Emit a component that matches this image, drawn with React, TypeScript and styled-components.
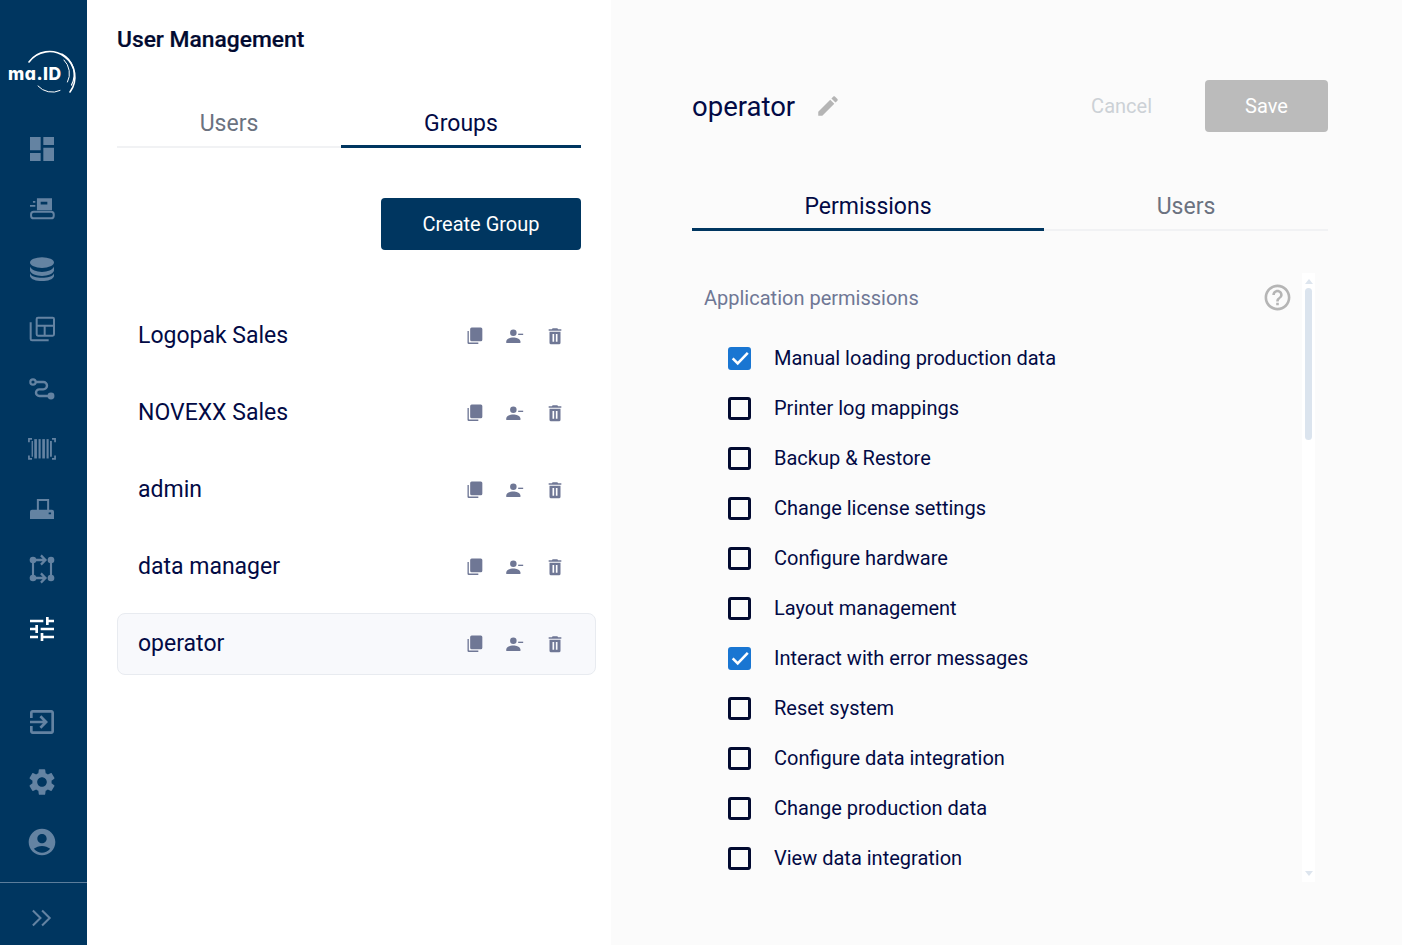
import React from "react";
import styled, { createGlobalStyle } from "styled-components";

const Global = createGlobalStyle`
  html, body { margin: 0; padding: 0; height: 100%; background: #fff; }
  body { font-family: Roboto, "Liberation Sans", sans-serif; color: #020a45; overflow: hidden; }
  * { box-sizing: border-box; }
`;

const Shell = styled.div`display: flex; width: 1402px; height: 945px; overflow: hidden;`;

const Sidebar = styled.aside`
  width: 87px; flex: none; height: 945px; background: #003660;
  display: flex; flex-direction: column;
`;
const LogoBox = styled.div`height: 119px; flex: none; svg { display: block; }`;
const NavList = styled.nav`display: flex; flex-direction: column;`;
const Spacer = styled.div`flex: 1;`;
const NavItem = styled.div<{ $active?: boolean }>`
  height: 60px; display: flex; align-items: center; justify-content: center;
  color: ${p => (p.$active ? "#ffffff" : "#6483a2")};
  svg { display: block; width: 32px; height: 32px; margin-left: -3px; }
`;
const SideFooter = styled.div`
  height: 63px; flex: none; margin-top: 10px; padding-top: 8px; border-top: 1px solid #5c7d9b; color: #6483a2;
  display: flex; align-items: center; justify-content: center;
  svg { display: block; width: 26px; height: 26px; margin-left: -6px; }
`;

const LeftPanel = styled.section`
  width: 524px; flex: none; height: 945px; background: #fff; padding: 0 15px 0 30px;
  display: flex; flex-direction: column;
`;
const Title = styled.h1`
  margin: 0; padding-top: 26px; height: 96px; font-size: 22.8px; line-height: 28px; font-weight: 500; color: #020a30;
  -webkit-text-stroke: 0.2px #020a30;
`;
const Tabs = styled.div<{ $w: string }>`
  display: grid; grid-template-columns: ${p => p.$w}; flex: none; height: 56px;
`;
const Tab = styled.div<{ $active?: boolean }>`
  display: flex; align-items: center; justify-content: center;
  height: 56px; font-size: 23px;
  color: ${p => (p.$active ? "#020a45" : "#6b7280")};
  border-bottom: ${p => (p.$active ? "3px solid #003660" : "2px solid #f1f2f4")};
  padding-top: ${p => (p.$active ? "9px" : "8px")};
`;
const LeftTabs = styled(Tabs)`width: 464px; margin-top: -4px; margin-bottom: 50px;`;
const CreateRow = styled.div`display: flex; justify-content: flex-end; width: 464px; margin-bottom: 55px;`;
const PrimaryButton = styled.button`
  width: 200px; height: 52px; border: 0; border-radius: 4px; background: #003660; color: #fff;
  font: 400 20px Roboto, sans-serif;
`;
const GroupList = styled.div`display: flex; flex-direction: column; gap: 15px;`;
const GroupRow = styled.div<{ $selected?: boolean }>`
  height: 62px; display: flex; align-items: center; padding: 0 30px 0 20px; border-radius: 8px;
  border: 1px solid ${p => (p.$selected ? "#e8ebf0" : "transparent")};
  background: ${p => (p.$selected ? "#f8f9fc" : "transparent")};
`;
const GroupName = styled.span`flex: 1; font-size: 23px; color: #020a45; padding-bottom: 2px;`;
const RowActions = styled.div`
  display: flex; gap: 20px; color: #6f7795;
  svg { display: block; width: 20px; height: 20px; flex: none; }
`;

const RightPanel = styled.section`
  flex: 1; height: 945px; background: #fbfbfb; padding: 80px 74px 0 81px;
  display: flex; flex-direction: column;
`;
const Header = styled.header`height: 52px; display: flex; align-items: center; flex: none;`;
const Heading = styled.h2`margin: 0; font-size: 27.5px; font-weight: 400; color: #020a45;`;
const EditIcon = styled.span`
  color: #b5b5b5; margin-left: 20px; svg { display: block; width: 26px; height: 26px; }
`;
const HeaderSpacer = styled.div`flex: 1;`;
const CancelBtn = styled.button`
  border: 0; background: transparent; color: #ccd1d6; font: 400 20px Roboto, sans-serif;
  margin-right: 53px; padding: 0;
`;
const SaveBtn = styled.button`
  width: 123px; height: 52px; border: 0; border-radius: 4px; background: #bbbbbb; color: #fff;
  font: 400 20px Roboto, sans-serif;
`;
const RightTabs = styled(Tabs)`width: 636px; margin-top: 43px; margin-bottom: 42px;`;
const Body = styled.div`display: flex; width: 623px; height: 609px; overflow: hidden;`;
const Perms = styled.div`flex: 1; min-width: 0; padding: 3px 0 0 12px;`;
const PermHead = styled.div`
  display: flex; align-items: center; justify-content: space-between; height: 44px; margin-bottom: 13px;
  font-size: 20px; color: #6f7795; padding-right: 9px;
  svg { display: block; width: 31px; height: 31px; color: #b5b5b5; margin-top: -1px; }
`;
const PermRow = styled.label`
  height: 50px; display: flex; align-items: center; padding-left: 24px; font-size: 20px; color: #020a45;
`;
const Check = styled.span<{ $on?: boolean }>`
  width: 23px; height: 23px; border-radius: 3px; flex: none; margin-right: 23px;
  display: flex; align-items: center; justify-content: center;
  background: ${p => (p.$on ? "#1976d2" : "transparent")};
  border: 3px solid ${p => (p.$on ? "#1976d2" : "#020a30")};
  svg { display: block; width: 22px; height: 22px; flex: none; }
`;
const ScrollTrack = styled.div`
  width: 13px; flex: none; height: 609px; background: #fff; display: flex; flex-direction: column; align-items: center;
`;
const ArrowUp = styled.div`
  width: 0; height: 0; margin-top: 6px; border-left: 4.5px solid transparent; border-right: 4.5px solid transparent;
  border-bottom: 5px solid #dde5ee;
`;
const Thumb = styled.div`width: 7px; height: 152px; margin-top: 4px; border-radius: 4px; background: #dbe4ee;`;
const ArrowDown = styled.div`
  width: 0; height: 0; margin-top: auto; margin-bottom: 6px; border-left: 4.5px solid transparent; border-right: 4.5px solid transparent;
  border-top: 5px solid #dde5ee;
`;

const LogoText = styled.text`
  font-family: Inter, "Open Sans", sans-serif; font-weight: 800; font-size: 17.5px;
  font-feature-settings: "cv11" 1; fill: #fff; letter-spacing: 0.5px;
`;
const Logo = () => (
  <svg width="87" height="119" viewBox="0 0 87 119">
    <g fill="none" stroke="#fff" strokeLinecap="round">
      <path d="M29 62 A24.5 24.5 0 0 1 70 92" strokeWidth="1.6" />
      <path d="M62 54 A23 23 0 0 1 71.5 85" strokeWidth="1.2" />
      <path d="M64 60 A19 19 0 0 1 67.5 82" strokeWidth="1" />
      <path d="M38 86 A19 19 0 0 0 60 90.5" strokeWidth="1" />
    </g>
    <LogoText x="8" y="80">ma.ID</LogoText>
  </svg>
);

const V = ({ children }: { children: React.ReactNode }) => (
  <svg viewBox="0 0 24 24" fill="currentColor">{children}</svg>
);

const icons: React.ReactNode[] = [
  <path key="d" d="M3 13h8V3H3v10zm0 8h8v-6H3v6zm10 0h8V11h-8v10zm0-18v6h8V3h-8z" />,
  <g key="p">
    <path fillRule="evenodd" d="M8.2 4h11.3v9H8.2zM11 6.5v2.2h5V6.5z" />
    <rect x="3.8" y="14" width="17" height="5" rx="2" fill="none" stroke="currentColor" strokeWidth="1.5" />
    <rect x="5.2" y="6" width="1.8" height="1.3" /><rect x="3" y="9" width="4" height="1.3" />
  </g>,
  <g key="db">
    <ellipse cx="12" cy="7.2" rx="9" ry="4" />
    <path d="M3 10.2c1 2.6 4.8 4 9 4s8-1.4 9-4v3c-.6 2.6-4.6 4-9 4s-8.4-1.4-9-4z" />
    <path d="M3 15.2c1 2.6 4.8 3.4 9 3.4s8-.8 9-3.4v2.2c-.6 2.4-4.6 3.6-9 3.6s-8.4-1.2-9-3.6z" />
  </g>,
  <g key="s" fill="none" stroke="currentColor" strokeWidth="1.5">
    <rect x="8" y="3.5" width="13" height="13.5" rx="1" />
    <path d="M8 9.5h13M14 9.5V17" />
    <path d="M3.5 7v12.5a1 1 0 0 0 1 1H17" />
  </g>,
  <g key="r">
    <circle cx="5.25" cy="6.75" r="2" fill="none" stroke="currentColor" strokeWidth="1.6" />
    <path d="M7.3 6.75H13a2.75 2.75 0 0 1 0 5.5H10a2.5 2.5 0 0 0 0 5H16.5" fill="none" stroke="currentColor" strokeWidth="1.8" />
    <circle cx="18.75" cy="17.25" r="2.6" />
  </g>,
  <g key="b">
    <path d="M4.5 4.4H2.2v2.6M19.5 4.4h2.3v2.6M4.5 19.4H2.2v-2.6M19.5 19.4h2.3v-2.6" fill="none" stroke="currentColor" strokeWidth="1.3" />
    <rect x="4.2" y="6" width="1" height="11.8" />
    <rect x="6.2" y="4.6" width="2" height="14.5" /><rect x="9.4" y="4.6" width="1.6" height="14.5" />
    <rect x="12.2" y="4.6" width="2" height="14.5" /><rect x="15.4" y="4.6" width="1.6" height="14.5" />
    <rect x="18" y="6" width="1.4" height="11.8" />
  </g>,
  <g key="pr">
    <path d="M8.9 13V5.2h7.7V13" fill="none" stroke="currentColor" strokeWidth="1.5" />
    <path fillRule="evenodd" d="M4.5 12.5H19.5a1.5 1.5 0 0 1 1.5 1.5v5.5H3V14a1.5 1.5 0 0 1 1.5-1.5zM17 14.6v1.4h1.8v-1.4z" />
  </g>,
  <g key="g">
    <circle cx="5.25" cy="5.25" r="2.5" /><circle cx="18.75" cy="5.25" r="2.5" />
    <circle cx="5.25" cy="18.75" r="2.5" /><circle cx="18.75" cy="18.75" r="2.5" />
    <path d="M5.25 6v12M18.75 6v12" stroke="currentColor" strokeWidth="1.6" fill="none" />
    <path d="M7 5.25h7.6M11.2 1.8l3.4 3.45-3.4 3.45M7 18.75h7.6M11.2 15.3l3.4 3.45-3.4 3.45" stroke="currentColor" strokeWidth="1.7" fill="none" />
  </g>,
  <path key="t" d="M3 17v2h6v-2H3zM3 5v2h10V5H3zm10 16v-2h8v-2h-8v-2h-2v6h2zM7 9v2H3v2h4v2h2V9H7zm14 4v-2H11v2h10zm-6-4h2V7h4V5h-4V3h-2v6z" />,
];

const bottomIcons: React.ReactNode[] = [
  <path key="e" d="M10.09 15.59L11.5 17l5-5-5-5-1.41 1.41L12.67 11H3v2h9.67l-2.58 2.59zM19 3H5c-1.11 0-2 .9-2 2v4h2V5h14v14H5v-4H3v4c0 1.1.89 2 2 2h14c1.1 0 2-.9 2-2V5c0-1.1-.9-2-2-2z" />,
  <path key="c" d="M19.14 12.94c.04-.3.06-.61.06-.94 0-.32-.02-.64-.07-.94l2.03-1.58c.18-.14.23-.41.12-.61l-1.92-3.32c-.12-.22-.37-.29-.59-.22l-2.39.96c-.5-.38-1.03-.7-1.62-.94l-.36-2.54c-.04-.24-.24-.41-.48-.41h-3.84c-.24 0-.43.17-.47.41l-.36 2.54c-.59.24-1.13.57-1.62.94l-2.39-.96c-.22-.08-.47 0-.59.22L2.74 8.87c-.12.21-.08.47.12.61l2.03 1.58c-.05.3-.09.63-.09.94s.02.64.07.94l-2.03 1.58c-.18.14-.23.41-.12.61l1.92 3.32c.12.22.37.29.59.22l2.39-.96c.5.38 1.03.7 1.62.94l.36 2.54c.05.24.24.41.48.41h3.84c.24 0 .44-.17.47-.41l.36-2.54c.59-.24 1.13-.56 1.62-.94l2.39.96c.22.08.47 0 .59-.22l1.92-3.32c.12-.22.07-.47-.12-.61l-2.01-1.58zM12 15.6c-1.98 0-3.6-1.62-3.6-3.6s1.62-3.6 3.6-3.6 3.6 1.62 3.6 3.6-1.62 3.6-3.6 3.6z" />,
  <path key="a" d="M12 2C6.48 2 2 6.48 2 12s4.48 10 10 10 10-4.48 10-10S17.52 2 12 2zm0 4c1.93 0 3.5 1.57 3.5 3.5S13.93 13 12 13s-3.5-1.57-3.5-3.5S10.07 6 12 6zm0 14c-2.03 0-4.43-.82-6.14-2.88C7.55 15.8 9.68 15 12 15s4.45.8 6.14 2.12C16.43 19.18 14.03 20 12 20z" />,
];

const CopyIcon = () => (
  <V>
    <path d="M3 6v14a1.5 1.5 0 0 0 1.5 1.5H16v-1.8H5a.4.4 0 0 1-.4-.4V6z" />
    <path d="M8 1.8h11a1.8 1.8 0 0 1 1.8 1.8v13a1.8 1.8 0 0 1-1.8 1.8H8A1.8 1.8 0 0 1 6.2 16.6V3.6A1.8 1.8 0 0 1 8 1.8z" />
  </V>
);
const PersonMinus = () => (
  <V>
    <circle cx="10" cy="8" r="3.9" />
    <path d="M1.5 20.5v-1.8c0-3.2 5.3-4.9 8.5-4.9s8.5 1.7 8.5 4.9v1.8z" />
    <rect x="15.8" y="9.2" width="6" height="1.6" />
  </V>
);
const TrashIcon = () => (
  <V>
    <path fillRule="evenodd" d="M5.4 6.8h13.2v13.4a1.8 1.8 0 0 1-1.8 1.8H7.2a1.8 1.8 0 0 1-1.8-1.8zM9 9.5v9.5h2V9.5zM13 9.5v9.5h2V9.5z" />
    <path d="M19.6 3.8h-3.8l-1-1.1H9.2l-1 1.1H4.4v1.8h15.2z" />
  </V>
);

const groups = ["Logopak Sales", "NOVEXX Sales", "admin", "data manager", "operator"];
const perms: [string, boolean][] = [
  ["Manual loading production data", true],
  ["Printer log mappings", false],
  ["Backup & Restore", false],
  ["Change license settings", false],
  ["Configure hardware", false],
  ["Layout management", false],
  ["Interact with error messages", true],
  ["Reset system", false],
  ["Configure data integration", false],
  ["Change production data", false],
  ["View data integration", false],
];

export default function App() {
  return (
    <Shell>
      <Global />
      <Sidebar>
        <LogoBox><Logo /></LogoBox>
        <NavList>
          {icons.map((ic, i) => (
            <NavItem key={i} $active={i === 8}><V>{ic}</V></NavItem>
          ))}
        </NavList>
        <Spacer />
        <NavList>
          {bottomIcons.map((ic, i) => (
            <NavItem key={i}><V>{ic}</V></NavItem>
          ))}
        </NavList>
        <SideFooter>
          <svg viewBox="0 0 24 24" fill="none" stroke="currentColor" strokeWidth="1.9">
            <path d="M4.5 5l7 7-7 7M13 5l7 7-7 7" />
          </svg>
        </SideFooter>
      </Sidebar>

      <LeftPanel>
        <Title>User Management</Title>
        <LeftTabs $w="224px 240px">
          <Tab>Users</Tab>
          <Tab $active>Groups</Tab>
        </LeftTabs>
        <CreateRow><PrimaryButton>Create Group</PrimaryButton></CreateRow>
        <GroupList>
          {groups.map(g => (
            <GroupRow key={g} $selected={g === "operator"}>
              <GroupName>{g}</GroupName>
              <RowActions><CopyIcon /><PersonMinus /><TrashIcon /></RowActions>
            </GroupRow>
          ))}
        </GroupList>
      </LeftPanel>

      <RightPanel>
        <Header>
          <Heading>operator</Heading>
          <EditIcon>
            <svg viewBox="0 0 24 24" fill="currentColor">
              <path d="M3 17.25V21h3.75L17.81 9.94l-3.75-3.75L3 17.25zM20.71 7.04c.39-.39.39-1.02 0-1.41l-2.34-2.34c-.39-.39-1.02-.39-1.41 0l-1.83 1.83 3.75 3.75 1.83-1.83z" />
            </svg>
          </EditIcon>
          <HeaderSpacer />
          <CancelBtn>Cancel</CancelBtn>
          <SaveBtn>Save</SaveBtn>
        </Header>
        <RightTabs $w="352px 284px">
          <Tab $active>Permissions</Tab>
          <Tab>Users</Tab>
        </RightTabs>
        <Body>
          <Perms>
            <PermHead>
              <span>Application permissions</span>
              <svg viewBox="0 0 24 24" fill="currentColor">
                <path d="M11 18h2v-2h-2v2zm1-16C6.48 2 2 6.48 2 12s4.48 10 10 10 10-4.48 10-10S17.52 2 12 2zm0 18c-4.41 0-8-3.59-8-8s3.59-8 8-8 8 3.59 8 8-3.59 8-8 8zm0-14c-2.21 0-4 1.79-4 4h2c0-1.1.9-2 2-2s2 .9 2 2c0 2-3 1.75-3 5h2c0-2.25 3-2.5 3-5 0-2.21-1.79-4-4-4z" />
              </svg>
            </PermHead>
            {perms.map(([label, on]) => (
              <PermRow key={label}>
                <Check $on={on}>
                  {on && (
                    <svg viewBox="0 0 24 24" fill="none" stroke="#fff" strokeWidth="2.8">
                      <path d="M4 12.5l5.5 5.5L20.5 6.5" />
                    </svg>
                  )}
                </Check>
                {label}
              </PermRow>
            ))}
          </Perms>
          <ScrollTrack>
            <ArrowUp />
            <Thumb />
            <ArrowDown />
          </ScrollTrack>
        </Body>
      </RightPanel>
    </Shell>
  );
}
